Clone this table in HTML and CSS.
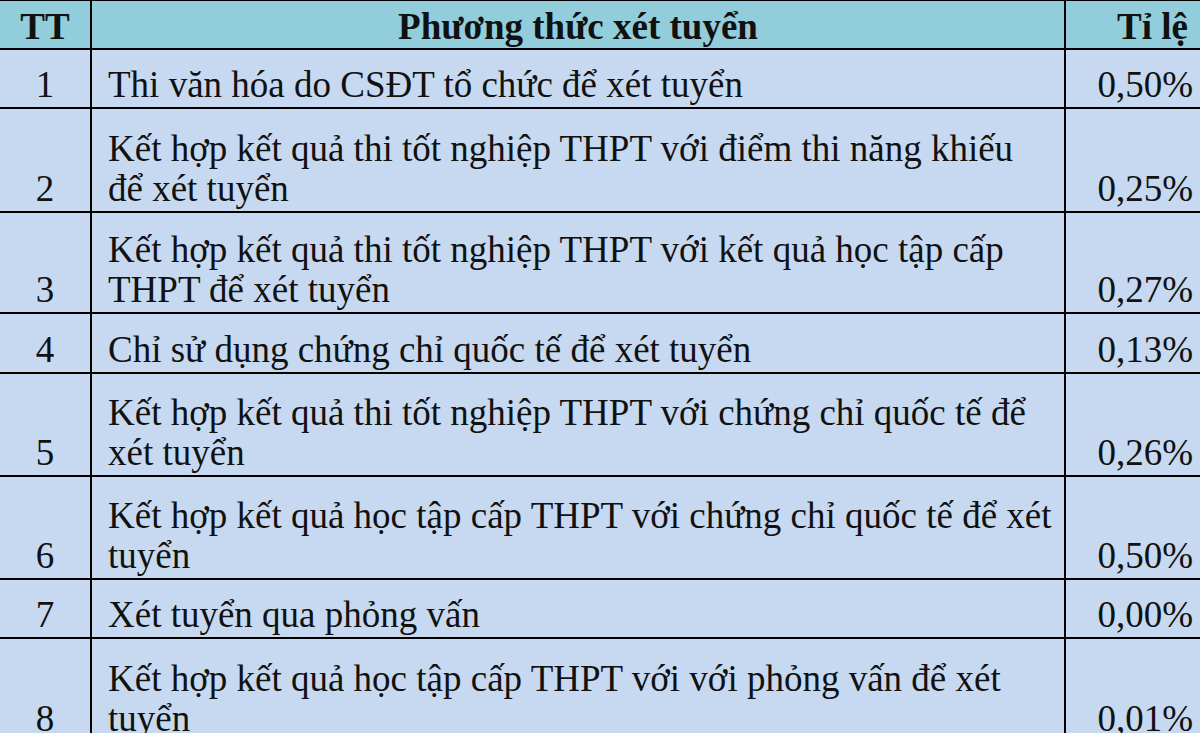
FILE: index.html
```html
<!DOCTYPE html>
<html lang="vi">
<head>
<meta charset="utf-8">
<link rel="stylesheet" href="styles.css">
</head>
<body>
<table class="grid">
  <colgroup><col class="c-tt"><col class="c-pt"><col class="c-tl"></colgroup>
  <thead>
    <tr class="head"><th>TT</th><th>Phương thức xét tuyển</th><th class="h-tl">Tỉ lệ</th></tr>
  </thead>
  <tbody>
    <tr class="r1"><td class="tt">1</td><td class="pt">Thi văn hóa do CSĐT tổ chức để xét tuyển</td><td class="tl">0,50%</td></tr>
    <tr class="r2"><td class="tt">2</td><td class="pt">Kết hợp kết quả thi tốt nghiệp THPT với điểm thi năng khiếu<br>để xét tuyển</td><td class="tl">0,25%</td></tr>
    <tr class="r3"><td class="tt">3</td><td class="pt">Kết hợp kết quả thi tốt nghiệp THPT với kết quả học tập cấp<br>THPT để xét tuyển</td><td class="tl">0,27%</td></tr>
    <tr class="r4"><td class="tt">4</td><td class="pt">Chỉ sử dụng chứng chỉ quốc tế để xét tuyển</td><td class="tl">0,13%</td></tr>
    <tr class="r5"><td class="tt">5</td><td class="pt">Kết hợp kết quả thi tốt nghiệp THPT với chứng chỉ quốc tế để<br>xét tuyển</td><td class="tl">0,26%</td></tr>
    <tr class="r5"><td class="tt">6</td><td class="pt">Kết hợp kết quả học tập cấp THPT với chứng chỉ quốc tế để xét<br>tuyển</td><td class="tl">0,50%</td></tr>
    <tr class="r1"><td class="tt">7</td><td class="pt">Xét tuyển qua phỏng vấn</td><td class="tl">0,00%</td></tr>
    <tr class="r2"><td class="tt">8</td><td class="pt">Kết hợp kết quả học tập cấp THPT với với phỏng vấn để xét<br>tuyển</td><td class="tl">0,01%</td></tr>
  </tbody>
</table>
</body>
</html>
```

FILE: styles.css
```css
html, body {
  margin: 0;
  padding: 0;
  background: #c6d9f0;
  overflow: hidden;
}
.grid {
  border-collapse: collapse;
  table-layout: fixed;
  width: 1212px;
  margin: -1px 0 0 -2px;
  font-family: "Liberation Serif", "Times New Roman", serif;
  color: #111;
}
.c-tt { width: 92px; }
.c-pt { width: 974px; }
.c-tl { width: 146px; }
.grid th, .grid td {
  border: 2px solid #000;
  padding: 0;
}
.grid .head { height: 49px; background: #92cddc; }
.grid .head th {
  font-weight: bold;
  font-size: 37px;
  line-height: 40px;
  text-align: center;
  vertical-align: middle;
  padding-top: 4px;
}
.grid .head .h-tl { text-align: right; padding-right: 22px; }
.grid tbody tr { background: #c6d9f0; }
.grid tbody td {
  font-size: 37px;
  line-height: 40px;
  vertical-align: bottom;
  padding-bottom: 2px;
}
.grid .r1 { height: 59px; }
.grid .r2 { height: 104px; }
.grid .r3 { height: 101px; }
.grid .r4 { height: 60px; }
.grid .r5 { height: 103px; }
.grid tbody .tt { text-align: center; }
.grid tbody .pt { padding-left: 16px; }
.grid tbody .tl { text-align: right; padding-right: 17px; }
```
